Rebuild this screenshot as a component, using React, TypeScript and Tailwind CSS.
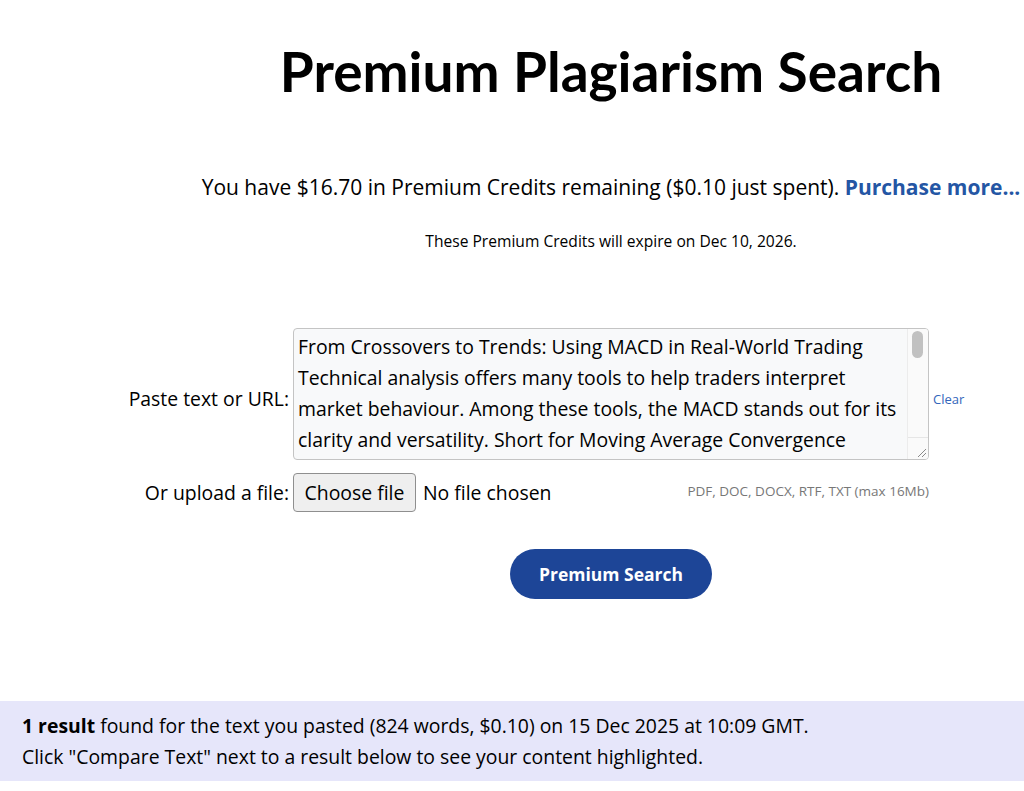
import React from 'react';

const pastedText =
  'From Crossovers to Trends: Using MACD in Real-World Trading\nTechnical analysis offers many tools to help traders interpret market behaviour. Among these tools, the MACD stands out for its clarity and versatility. Short for Moving Average Convergence Divergence, the indicator tracks the relationship between two exponential moving averages of price.';

const App: React.FC = () => {
  return (
    <div className="min-h-screen bg-white font-['Open_Sans',sans-serif] text-black">
      <div className="pl-[198px] text-center">
        <h1 className="pt-[38px] font-['Lato',sans-serif] text-[55px] font-bold leading-[1.2]">
          Premium Plagiarism Search
        </h1>
        <p className="mt-[69px] text-[21px] leading-[28px]">
          You have $16.70 in Premium Credits remaining ($0.10 just spent).{' '}
          <a href="#" className="font-bold text-[#2456a4]">
            Purchase more...
          </a>
        </p>
        <p className="mt-[30px] text-[15.6px] leading-[20px]">These Premium Credits will expire on Dec 10, 2026.</p>
      </div>

      <form className="mt-[77px] grid grid-cols-[289px_636px_1fr] items-center gap-x-[4px] gap-y-[13px]">
        <label className="pt-[9px] text-right text-[19.4px]">Paste text or URL:</label>
        <div className="relative h-[132px] w-[636px] overflow-hidden rounded-[4px] border border-[#c4c4c4] bg-[#f8f9fa]">
          <textarea
            readOnly
            defaultValue={pastedText}
            className="h-full w-full resize-none overflow-hidden bg-transparent pl-[4px] pr-[26px] pt-[2px] text-[19.4px] leading-[31px] outline-none"
          />
          <div className="absolute right-0 top-0 flex h-full w-[21px] flex-col border-l border-[#ececec] bg-[#fafafa]">
            <div className="flex-1 px-[4px] pt-[2px]">
              <div className="h-[27px] w-[11px] rounded-full bg-[#c1c1c1]" />
            </div>
            <div className="relative h-[22px] border-t border-[#e6e6e6]">
              <svg className="absolute bottom-[1px] right-[1px]" width="12" height="12" viewBox="0 0 12 12">
                <path d="M11 3 L3 11 M11 7 L7 11" stroke="#8a8a8a" strokeWidth="1" fill="none" />
              </svg>
            </div>
          </div>
        </div>
        <a href="#" className="pt-[12px] text-[13px] text-[#3366bb]">
          Clear
        </a>

        <label className="text-right text-[19.4px]">Or upload a file:</label>
        <div className="flex items-center justify-between">
          <div className="flex items-center">
            <button
              type="button"
              className="h-[39px] w-[123px] rounded-[4px] border border-[#8f8f8f] bg-[#efefef] text-[19.4px]"
            >
              Choose file
            </button>
            <span className="ml-[7px] text-[19.4px]">No file chosen</span>
          </div>
          <span className="pb-[2px] text-[13.5px] text-[#777]">PDF, DOC, DOCX, RTF, TXT (max 16Mb)</span>
        </div>
        <div />
      </form>

      <div className="mt-[37px] flex justify-center pl-[198px]">
        <button
          type="button"
          className="h-[50px] w-[202px] rounded-full bg-[#1d4597] text-[17.5px] font-bold text-white"
        >
          Premium Search
        </button>
      </div>

      <div className="mt-[102px] bg-[#e6e6fa] px-[22px] py-[9px] text-[19.4px] leading-[31px]">
        <p>
          <span className="font-bold">1 result</span> found for the text you pasted (824 words, $0.10) on 15 Dec 2025
          at 10:09 GMT.
        </p>
        <p>Click "Compare Text" next to a result below to see your content highlighted.</p>
      </div>
    </div>
  );
};

export default App;
